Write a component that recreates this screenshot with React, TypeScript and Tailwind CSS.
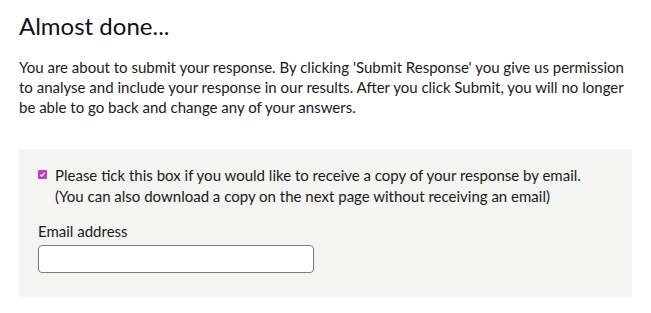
import React from "react";

export default function App() {
  return (
    <div className="bg-white w-[651px] h-[313px] px-[19px] pt-[10px] text-[#1a1a1a]" style={{ fontFamily: "Lato, 'Open Sans', sans-serif" }}>
      <h1 className="text-[24px] leading-[32px] text-[#111]">Almost done...</h1>
      <p className="mt-[15px] text-[15px] leading-[20px]">
        You are about to submit your response. By clicking 'Submit Response' you give us permission to analyse and include your response in our results. After you click Submit, you will no longer be able to go back and change any of your answers.
      </p>
      <div className="mt-[32px] w-[613px] h-[148px] bg-[#f4f4f2] px-[19px] pt-[16px]">
        <div className="flex items-start text-[15px] leading-[21px]">
          <span className="mt-[5px] w-[9px] h-[9px] bg-[#c73bc4] rounded-[1px] flex items-center justify-center shrink-0">
            <svg width="7" height="7" viewBox="0 0 8 8">
              <path d="M1.5 4.2 L3.2 5.8 L6.5 2" stroke="white" strokeWidth="1.4" fill="none" />
            </svg>
          </span>
          <span className="ml-[8px]">
            Please tick this box if you would like to receive a copy of your response by email.
            <br />
            (You can also download a copy on the next page without receiving an email)
          </span>
        </div>
        <div className="mt-[14px] text-[15px] leading-[20px]">Email address</div>
        <input className="mt-[4px] block w-[276px] h-[28px] bg-white border border-[#7a7a7a] rounded-[4px]" />
      </div>
    </div>
  );
}
